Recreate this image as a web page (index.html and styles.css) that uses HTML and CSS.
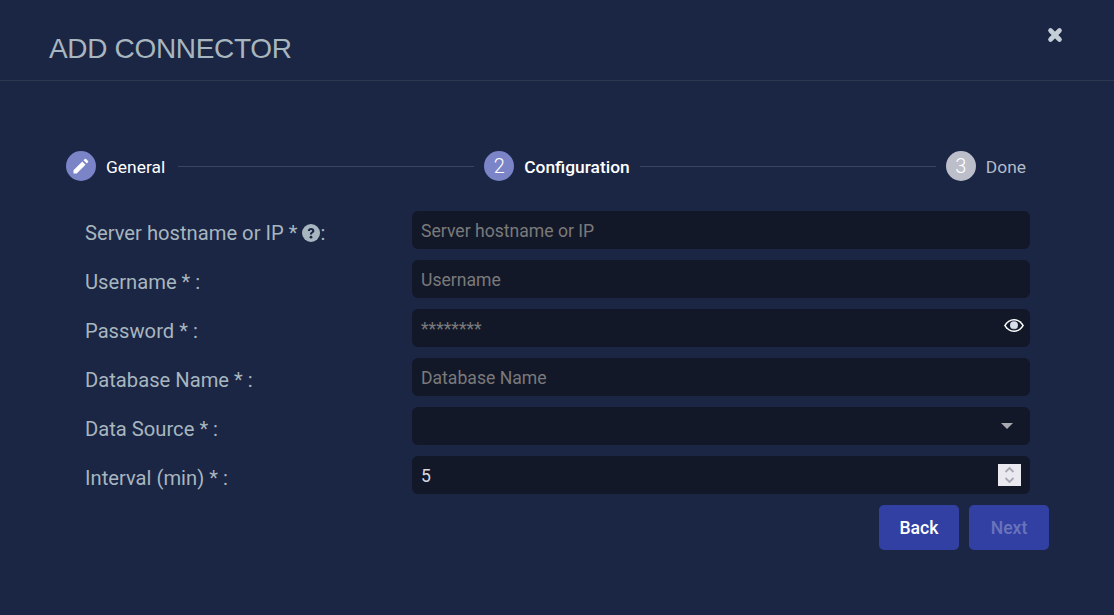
FILE: index.html
```html
<!DOCTYPE html>
<html lang="en">
<head>
<meta charset="utf-8">
<title>Add connector</title>
<link rel="stylesheet" href="styles.css">
</head>
<body>
<div class="dialog">
  <header class="dialog-header">
    <h1 class="dialog-title">ADD CONNECTOR</h1>
    <button class="close" type="button" aria-label="Close">
      <svg viewBox="0 0 16 16" width="16" height="16"><path d="M3.500 3.500 12.500 12.500M12.500 3.500 3.500 12.500" fill="none" stroke="#c3ced6" stroke-width="4.600" stroke-linecap="round"/></svg>
    </button>
  </header>
  <div class="dialog-body">
    <ol class="stepper">
      <li class="step step-active">
        <span class="step-icon">
          <svg viewBox="0 0 18 18" width="18" height="18"><path d="M1.500 13.300V16.500H4.700L13.500 7.700 10.300 4.500zM14.700 6.500 16 5.200a.9.900 0 0 0 0-1.300L14.100 2a.9.900 0 0 0-1.300 0L11.500 3.300z" fill="#fff"/></svg>
        </span>
        <span class="step-label">General</span>
      </li>
      <li class="step-line step-line-first"></li>
      <li class="step step-active">
        <span class="step-icon">2</span>
        <span class="step-label step-label-strong">Configuration</span>
      </li>
      <li class="step-line"></li>
      <li class="step">
        <span class="step-icon step-icon-off">3</span>
        <span class="step-label step-label-off">Done</span>
      </li>
    </ol>
    <form class="form">
      <label class="field-label">Server hostname or IP *
        <svg class="help" viewBox="0 0 18 18" width="18" height="18"><circle cx="9" cy="9" r="9" fill="#a7b6bf"/><path d="M5.800 6.900C5.900 5 7.300 3.900 9.100 3.900c1.900 0 3.300 1.100 3.300 2.800 0 1.300-.8 2-1.600 2.500-.7.400-.9.700-.9 1.400H7.900c0-1.400.4-2.100 1.300-2.600.7-.4 1-.7 1-1.200 0-.5-.5-.8-1.100-.8-.7 0-1.200.4-1.300 1.100z" fill="#1b2544"/><circle cx="9" cy="13.200" r="1.400" fill="#1b2544"/></svg>:</label>
      <input class="control" type="text" placeholder="Server hostname or IP">
      <label class="field-label">Username * :</label>
      <input class="control" type="text" placeholder="Username">
      <label class="field-label">Password * :</label>
      <div class="control-wrap">
        <input class="control" type="password" placeholder="********">
        <svg class="eye" viewBox="0 0 20 13" width="20" height="13"><path d="M0 6.500C2.400 2.300 5.900 0 10 0s7.600 2.300 10 6.500C17.600 10.700 14.100 13 10 13S2.400 10.700 0 6.500z" fill="#fff"/><path d="M1.800 6.500C3.900 3.200 6.700 1.500 10 1.500s6.100 1.700 8.200 5c-2.100 3.300-4.900 5-8.200 5s-6.100-1.700-8.200-5z" fill="#131829"/><circle cx="10" cy="6.300" r="4" fill="#d9deea"/><path d="M6.900 8.800A4 4 0 0 0 13.900 7 4 3 0 0 1 6.900 8.800z" fill="#5a6480"/></svg>
      </div>
      <label class="field-label">Database Name * :</label>
      <input class="control" type="text" placeholder="Database Name">
      <label class="field-label">Data Source * :</label>
      <div class="control-wrap">
        <div class="control"></div>
        <span class="caret"></span>
      </div>
      <label class="field-label">Interval (min) * :</label>
      <div class="control-wrap">
        <input class="control control-number" type="number" value="5">
        <span class="spinner">
          <svg viewBox="0 0 23 22" width="23" height="22"><path d="M7.500 8 11.500 4 15.500 8M7.500 14 11.500 18 15.500 14" fill="none" stroke="#a9a9b5" stroke-width="1.800"/></svg>
        </span>
      </div>
    </form>
    <div class="actions">
      <button class="btn" type="button">Back</button>
      <button class="btn btn-disabled" type="button">Next</button>
    </div>
  </div>
</div>
</body>
</html>
```
FILE: styles.css
```css
* { box-sizing: border-box; }
html, body { height: 100%; }
body {
  margin: 0;
  background: #1b2544;
  font-family: Roboto, sans-serif;
  overflow: hidden;
}
.dialog { height: 615px; }
.dialog-header {
  height: 81px;
  padding: 0 51px 0 49px;
  border-bottom: 1px solid #2e3750;
  display: flex;
  justify-content: space-between;
}
.dialog-title {
  margin: 0;
  padding-top: 33px;
  font: 400 28px/32px "Liberation Sans", Arial, sans-serif;
  letter-spacing: -0.33px;
  color: #a7b6bf;
}
.close {
  margin-top: 27px;
  width: 16px;
  height: 16px;
  padding: 0;
  border: 0;
  background: none;
}
.close svg { display: block; }
.dialog-body { padding: 70px 65px 0 66px; }
.stepper {
  list-style: none;
  margin: 0;
  padding: 0 23px 0 0;
  display: flex;
  align-items: center;
  height: 30px;
}
.step { display: flex; align-items: center; gap: 10px; }
.step-icon {
  width: 30px;
  height: 30px;
  border-radius: 50%;
  background: #7a84c7;
  color: #fff;
  font-size: 20px;
  font-weight: 300;
  display: flex;
  align-items: center;
  justify-content: center;
}
.step-icon-off { background: #bcbfc9; }
.step-label { font-size: 17.400px; line-height: 24px; padding-top: 2px; color: #fff; }
.step-label-strong { font-weight: 500; }
.step-label-off { color: #b3bbc8; }
.step-line {
  flex: 1;
  height: 1px;
  margin: 0 10px;
  background: #3b4460;
}
.step-line-first { margin-left: 13px; }
.form {
  margin-top: 30px;
  padding-left: 19px;
  width: 964px;
  display: grid;
  grid-template-columns: 327px 618px;
  grid-auto-rows: 38px;
  row-gap: 11px;
}
.field-label {
  font-size: 20.200px;
  line-height: 44px;
  color: #a7b6bf;
  white-space: nowrap;
}
.help { vertical-align: -2px; }
.control {
  width: 100%;
  height: 38px;
  padding: 2px 9px 0;
  border: 0;
  border-radius: 6px;
  background: #131829;
  color: #d6dae0;
  font: 400 17.600px Roboto, sans-serif;
  outline: 0;
  display: block;
}
.control::placeholder { color: #7a7a7a; opacity: 1; }
.control-number { appearance: textfield; }
.control-number::-webkit-inner-spin-button { display: none; }
.control-wrap { position: relative; height: 38px; }
.eye { position: absolute; right: 6px; top: 10px; }
.caret {
  position: absolute;
  right: 17px;
  top: 16px;
  border-style: solid;
  border-width: 6px 6px 0;
  border-color: #a8aab0 transparent transparent;
}
.spinner {
  position: absolute;
  right: 9px;
  top: 8px;
  width: 23px;
  height: 22px;
  background: #e9e9ef;
}
.spinner svg { display: block; }
.actions {
  margin-top: 11px;
  display: flex;
  justify-content: flex-end;
  gap: 10px;
}
.btn {
  width: 80px;
  height: 45px;
  border: 0;
  border-radius: 5px;
  background: #3240a3;
  color: #fff;
  font: 500 17.600px Roboto, sans-serif;
}
.btn-disabled { color: #6a74bb; }
```
